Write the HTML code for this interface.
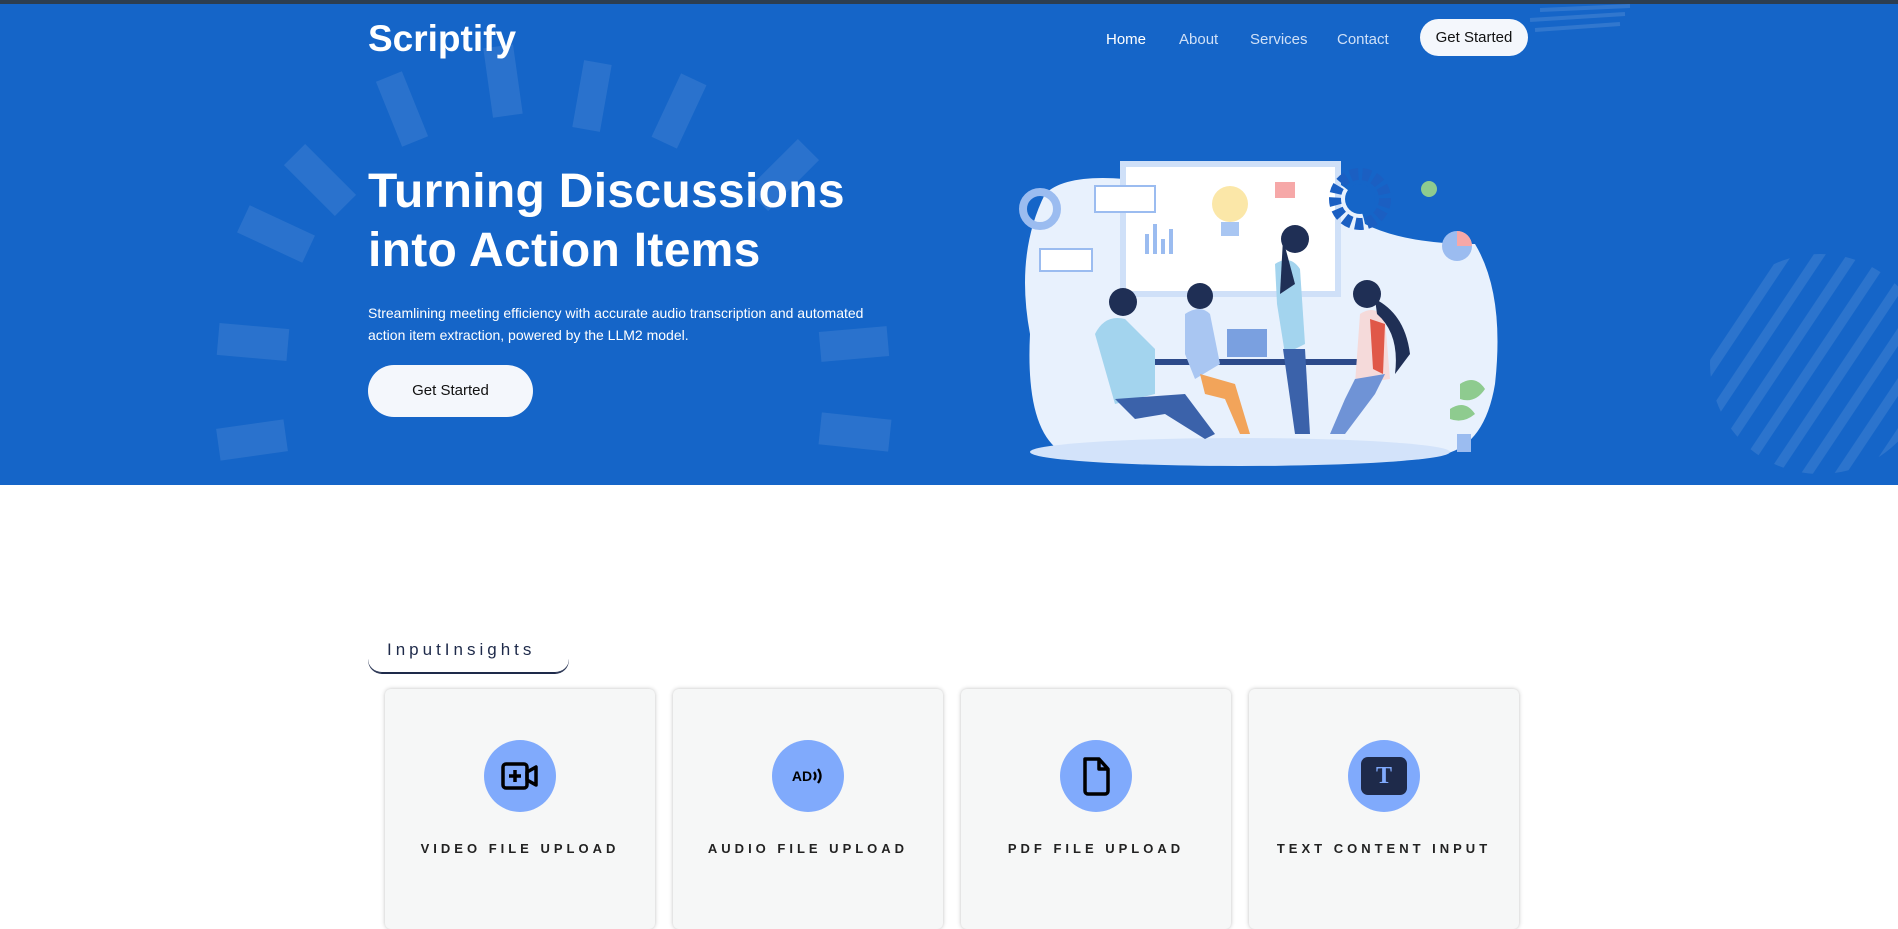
<!DOCTYPE html>
<html><head><meta charset="utf-8"><style>
*{margin:0;padding:0;box-sizing:border-box}
body{width:1898px;height:914px;overflow:hidden;background:#fff;font-family:"Liberation Sans",sans-serif;position:relative}
.top{position:absolute;left:0;top:0;width:1898px;height:4px;background:#2d3e50}
.hero{position:absolute;left:0;top:4px;width:1898px;height:481px;background:#1565c8;overflow:hidden}
.r{position:absolute;background:rgba(255,255,255,0.09)}
.logo{position:absolute;left:368px;top:14px;color:#fff;font-weight:bold;font-size:37px}
.nav{position:absolute;top:27px;color:#cfe0f7;font-size:15px}
.nbtn{position:absolute;left:1420px;top:15px;width:108px;height:37px;border-radius:19px;background:#f4f7fc;color:#111;font-size:15px;text-align:center;line-height:37px}
h1{position:absolute;left:368px;top:158px;color:#fff;font-size:48px;line-height:59px;font-weight:bold;letter-spacing:0.3px}
.p{position:absolute;left:368px;top:298px;color:#fff;font-size:14px;line-height:22px;width:535px}
.hbtn{position:absolute;left:368px;top:361px;width:165px;height:52px;border-radius:26px;background:#f4f7fc;color:#111;font-size:15px;text-align:center;line-height:52px}
.tab{position:absolute;left:368px;top:635px;width:201px;height:38px;border-bottom:1.5px solid #1e2a4a;border-radius:0 0 14px 14px;box-shadow:0 1px 0 #1e2a4a;font-size:17px;letter-spacing:4px;color:#1e2a4a;padding:5px 0 0 19px}
.card{position:absolute;top:689px;width:270px;height:240px;background:#f6f7f7;border-radius:6px;box-shadow:0 0 4px rgba(0,0,0,0.25)}
.ic{position:absolute;left:99px;top:51px;width:72px;height:72px;border-radius:50%;background:#80aafc;display:flex;align-items:center;justify-content:center}
.lb{position:absolute;left:0;width:270px;top:152px;text-align:center;font-size:13px;letter-spacing:4px;font-weight:bold;color:#222}
</style></head><body>
<div class="top"></div>
<div class="hero">
<div class="r" style="left:488px;top:42px;width:30px;height:70px;transform:rotate(-8deg)"></div>
<div class="r" style="left:578px;top:58px;width:28px;height:68px;transform:rotate(10deg)"></div>
<div class="r" style="left:388px;top:70px;width:28px;height:70px;transform:rotate(-22deg)"></div>
<div class="r" style="left:665px;top:72px;width:28px;height:70px;transform:rotate(25deg)"></div>
<div class="r" style="left:305px;top:140px;width:30px;height:72px;transform:rotate(-45deg)"></div>
<div class="r" style="left:768px;top:135px;width:30px;height:72px;transform:rotate(45deg)"></div>
<div class="r" style="left:240px;top:215px;width:72px;height:30px;transform:rotate(25deg)"></div>
<div class="r" style="left:218px;top:322px;width:70px;height:32px;transform:rotate(5deg)"></div>
<div class="r" style="left:218px;top:420px;width:68px;height:32px;transform:rotate(-8deg)"></div>
<div class="r" style="left:820px;top:325px;width:68px;height:30px;transform:rotate(-5deg)"></div>
<div class="r" style="left:820px;top:412px;width:70px;height:32px;transform:rotate(6deg)"></div>
<svg style="position:absolute;left:1700px;top:240px" width="240" height="240"><defs><clipPath id="c"><circle cx="120" cy="120" r="110"/></clipPath></defs><g clip-path="url(#c)" stroke="rgba(255,255,255,0.1)" stroke-width="10">
<line x1="-40" y1="200" x2="120" y2="-40"/><line x1="-20" y1="220" x2="140" y2="-20"/><line x1="0" y1="240" x2="160" y2="0"/><line x1="20" y1="260" x2="180" y2="20"/><line x1="40" y1="280" x2="200" y2="40"/><line x1="60" y1="300" x2="220" y2="60"/><line x1="80" y1="320" x2="240" y2="80"/><line x1="100" y1="340" x2="260" y2="100"/></g></svg>
<svg style="position:absolute;left:1500px;top:0" width="140" height="40" stroke="rgba(255,255,255,0.12)" stroke-width="4"><line x1="40" y1="6" x2="130" y2="2"/><line x1="30" y1="16" x2="125" y2="10"/><line x1="35" y1="26" x2="120" y2="20"/></svg>
<div class="logo">Scriptify</div>
<div class="nav" style="left:1106px;color:#fff">Home</div>
<div class="nav" style="left:1179px">About</div>
<div class="nav" style="left:1250px">Services</div>
<div class="nav" style="left:1337px">Contact</div>
<div class="nbtn">Get Started</div>
<h1>Turning Discussions<br>into Action Items</h1>
<div class="p">Streamlining meeting efficiency with accurate audio transcription and automated action item extraction, powered by the LLM2 model.</div>
<div class="hbtn">Get Started</div>
<svg style="position:absolute;left:1005px;top:130px" width="500" height="340">
<path d="M40 60 Q60 40 120 45 L300 45 Q350 40 360 90 Q400 110 470 110 Q500 160 490 250 Q480 310 440 320 L60 320 Q20 300 25 200 Q10 120 40 60Z" fill="#e8f1fd"/>
<ellipse cx="235" cy="318" rx="210" ry="14" fill="#d3e3fa"/>
<rect x="118" y="30" width="215" height="130" fill="#fff" stroke="#cfe0f8" stroke-width="6"/>
<circle cx="225" cy="70" r="18" fill="#fbe7a8"/><rect x="216" y="88" width="18" height="14" fill="#a9c6f2"/>
<rect x="140" y="100" width="4" height="20" fill="#9bbcf0"/><rect x="148" y="90" width="4" height="30" fill="#9bbcf0"/><rect x="156" y="105" width="4" height="15" fill="#9bbcf0"/><rect x="164" y="95" width="4" height="25" fill="#9bbcf0"/>
<rect x="90" y="52" width="60" height="26" fill="#fff" stroke="#9bbcf0" stroke-width="2"/>
<rect x="270" y="48" width="20" height="16" fill="#f6a8a8"/>
<circle cx="355" cy="65" r="25" fill="none" stroke="#1b5fc2" stroke-width="12" stroke-dasharray="8 4"/><circle cx="355" cy="65" r="15" fill="#1565c8"/>
<circle cx="424" cy="55" r="8" fill="#8ecb8f"/>
<circle cx="452" cy="112" r="15" fill="#9bbcf0"/><path d="M452 112 L452 97 A15 15 0 0 1 467 112Z" fill="#f6a8a8"/>
<circle cx="35" cy="75" r="17" fill="none" stroke="#9bbcf0" stroke-width="8"/>
<rect x="35" y="115" width="52" height="22" fill="#fff" stroke="#9bbcf0" stroke-width="2"/>
<rect x="130" y="225" width="240" height="6" fill="#2c4a8a"/>
<path d="M90 200 Q100 180 120 185 L150 215 L150 260 L110 270 Z" fill="#a3d4ee"/>
<path d="M110 265 L180 260 L210 300 L200 305 L160 280 L130 285Z" fill="#3b62aa"/>
<circle cx="118" cy="168" r="14" fill="#1f2f55"/>
<path d="M180 180 Q195 170 205 180 L215 230 L190 245 L180 220Z" fill="#a9c6f2"/>
<circle cx="195" cy="162" r="13" fill="#1f2f55"/>
<path d="M195 240 L230 250 L245 300 L235 300 L220 265 L200 260Z" fill="#f2a45a"/>
<rect x="222" y="195" width="40" height="28" fill="#7aa0e0"/>
<path d="M270 130 Q285 120 295 135 L300 210 L280 220 L272 170Z" fill="#a3d4ee"/>
<circle cx="290" cy="105" r="14" fill="#1f2f55"/><path d="M278 105 L275 160 L290 150Z" fill="#1f2f55"/>
<path d="M278 215 L300 215 L305 300 L290 300Z" fill="#3b62aa"/>
<path d="M355 180 Q370 170 380 185 L385 245 L350 250Z" fill="#f5dada"/><path d="M365 185 L380 190 L378 240 L368 235Z" fill="#e05848"/>
<circle cx="362" cy="160" r="14" fill="#1f2f55"/><path d="M370 165 Q400 180 405 220 L390 240 Q395 200 372 180Z" fill="#1f2f55"/>
<path d="M350 245 L380 240 L370 260 L340 300 L325 300 L340 265Z" fill="#6f93d6"/>
<path d="M455 250 Q470 240 480 255 Q470 270 455 265Z" fill="#8ecb8f"/><path d="M445 275 Q460 265 470 280 Q458 290 445 285Z" fill="#8ecb8f"/><rect x="452" y="300" width="14" height="18" fill="#9bbcf0"/>
</svg>
</div>
<div class="tab">InputInsights</div>
<div class="card" style="left:385px"><div class="ic"><svg width="40" height="34" viewBox="0 0 40 34" fill="none" stroke="#000" stroke-width="3.5"><rect x="3" y="5" width="24" height="24" rx="3"/><path d="M15 11v12M9 17h12"/><path d="M27 13l9-5v18l-9-5z" stroke-linejoin="round"/></svg></div><div class="lb">VIDEO FILE UPLOAD</div></div>
<div class="card" style="left:673px"><div class="ic"><span style="font-weight:bold;font-size:14px;color:#000">AD</span><svg width="12" height="22" viewBox="0 0 12 22" fill="none" stroke="#000" stroke-width="2.3"><path d="M2 7q3 4 0 8M6 4q5 7 0 14"/></svg></div><div class="lb">AUDIO FILE UPLOAD</div></div>
<div class="card" style="left:961px"><div class="ic"><svg width="30" height="42" viewBox="0 0 30 42" fill="none" stroke="#000" stroke-width="3.5" stroke-linejoin="round"><path d="M4 4h14l9 10v22a3 3 0 0 1-3 3H7a3 3 0 0 1-3-3z"/><path d="M18 4v10h9"/></svg></div><div class="lb">PDF FILE UPLOAD</div></div>
<div class="card" style="left:1249px"><div class="ic"><div style="width:46px;height:38px;border-radius:7px;background:#1e2a4a;color:#80aafc;font-family:'Liberation Serif',serif;font-weight:bold;font-size:24px;text-align:center;line-height:38px">T</div></div><div class="lb">TEXT CONTENT INPUT</div></div>
</body></html>
